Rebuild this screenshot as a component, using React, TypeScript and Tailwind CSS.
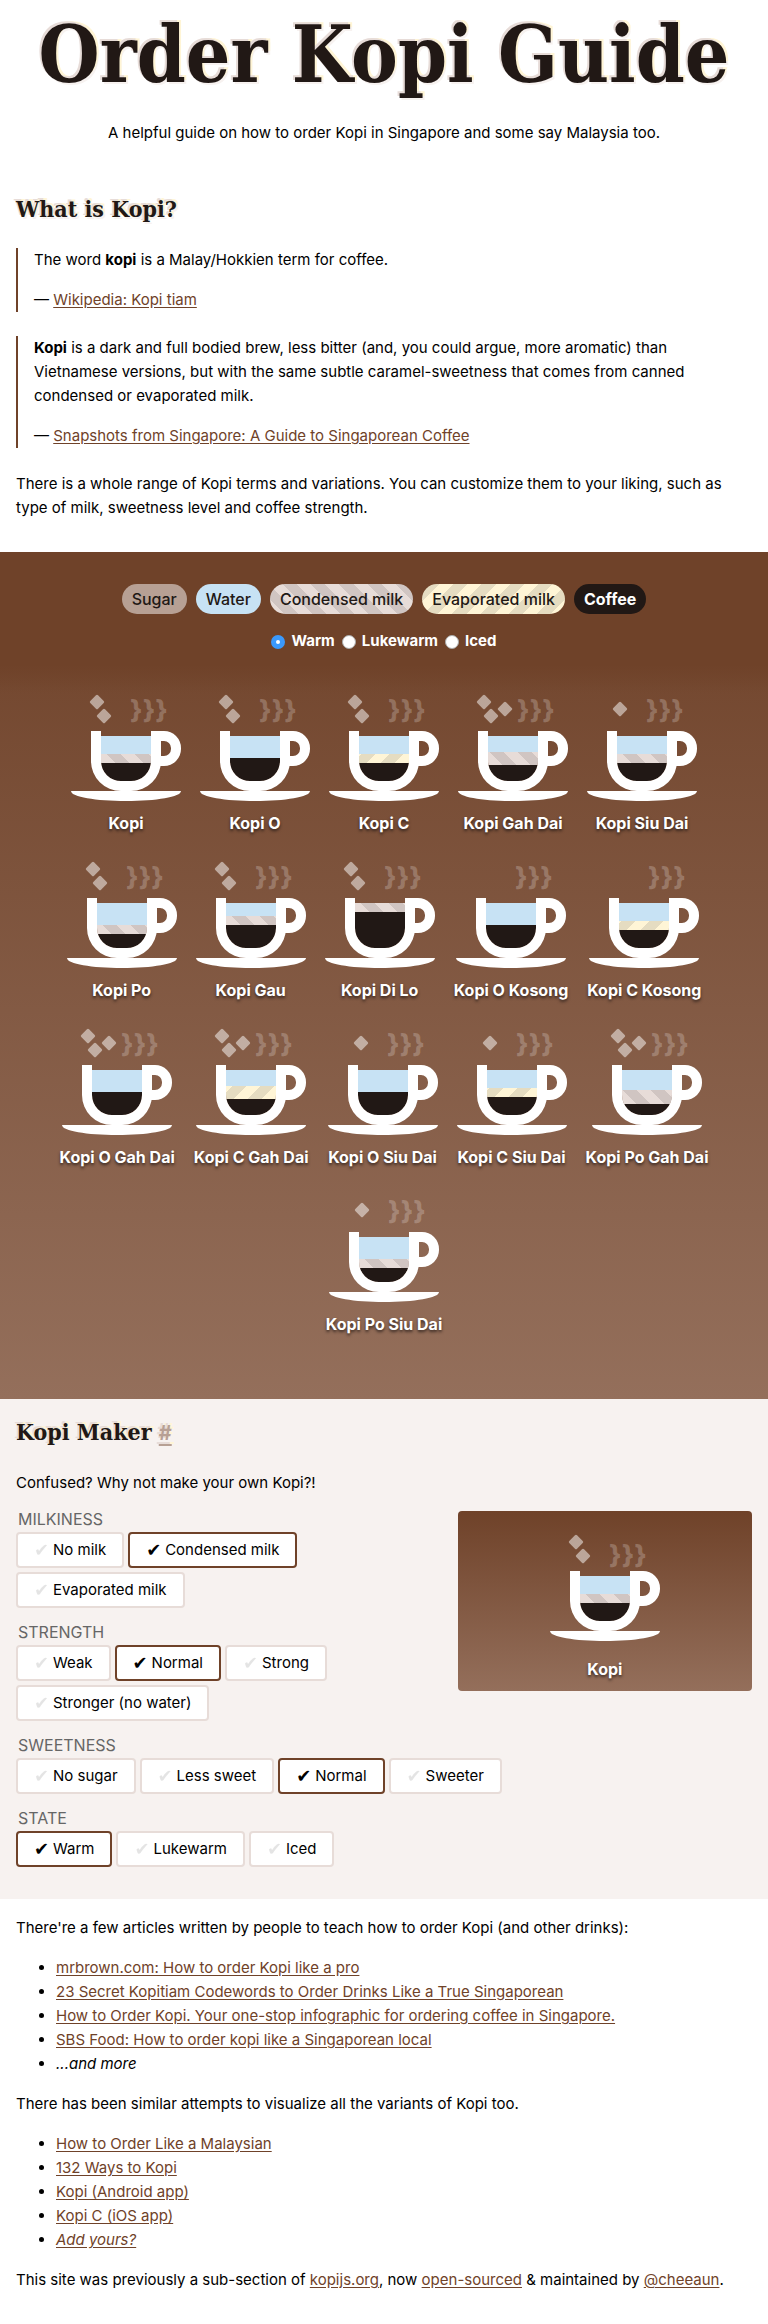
import { useId, useState } from "react";
import type { ReactNode } from "react";

type Milk = "condensed" | "evaporated";

interface Recipe {
  name: string;
  sugar: number;
  water: number;
  milk?: Milk;
  milkAmount?: number;
}

const CUP_DEPTH = 45;

// Amounts are pixel heights inside the cup; coffee fills whatever is left.
const RECIPES: Recipe[] = [
  { name: "Kopi", sugar: 2, water: 18, milk: "condensed", milkAmount: 9 },
  { name: "Kopi O", sugar: 2, water: 22 },
  { name: "Kopi C", sugar: 2, water: 18, milk: "evaporated", milkAmount: 9 },
  { name: "Kopi Gah Dai", sugar: 3, water: 16, milk: "condensed", milkAmount: 13 },
  { name: "Kopi Siu Dai", sugar: 1, water: 18, milk: "condensed", milkAmount: 9 },
  { name: "Kopi Po", sugar: 2, water: 22, milk: "condensed", milkAmount: 9 },
  { name: "Kopi Gau", sugar: 2, water: 13, milk: "condensed", milkAmount: 9 },
  { name: "Kopi Di Lo", sugar: 2, water: 0, milk: "condensed", milkAmount: 9 },
  { name: "Kopi O Kosong", sugar: 0, water: 22 },
  { name: "Kopi C Kosong", sugar: 0, water: 18, milk: "evaporated", milkAmount: 9 },
  { name: "Kopi O Gah Dai", sugar: 3, water: 22 },
  { name: "Kopi C Gah Dai", sugar: 3, water: 16, milk: "evaporated", milkAmount: 13 },
  { name: "Kopi O Siu Dai", sugar: 1, water: 22 },
  { name: "Kopi C Siu Dai", sugar: 1, water: 18, milk: "evaporated", milkAmount: 9 },
  { name: "Kopi Po Gah Dai", sugar: 3, water: 20, milk: "condensed", milkAmount: 14 },
  { name: "Kopi Po Siu Dai", sugar: 1, water: 22, milk: "condensed", milkAmount: 9 },
];

const SUGAR_SPOTS: Record<number, [number, number][]> = {
  0: [],
  1: [[33, 16]],
  2: [[26, 9], [33, 23]],
  3: [[26, 9], [33, 23], [47, 16]],
};

function Cup({ recipe, state, steamDrop = 0 }: { recipe: Recipe; state: string; steamDrop?: number }) {
  const id = useId();
  const { sugar, water, milk, milkAmount = 0 } = recipe;
  const top = 43;
  const milkTop = top + water;
  const milkBottom = milkTop + milkAmount;
  const bottom = top + CUP_DEPTH;
  const start = milk === "evaporated" ? 80 : 30;
  const end = milk === "evaporated" ? 80 - 14.142 : 30 + 14.142;
  const light = milk === "evaporated" ? "#fff5d6" : "#e7dcd8";
  const dark = milk === "evaporated" ? "#e5dcc1" : "#d0c5c2";
  return (
    <svg width="110" height="108" viewBox="0 0 110 108" className="block overflow-visible" aria-hidden="true">
      <defs>
        <clipPath id={id + "c"}>
          <path d="M30 38V68a20 20 0 0 0 20 20h10a20 20 0 0 0 20-20V38z" />
        </clipPath>
        <linearGradient id={id + "m"} gradientUnits="userSpaceOnUse" spreadMethod="repeat" x1={start} y1={milkBottom} x2={end} y2={milkBottom - 14.142}>
          <stop offset="0" stopColor={light} />
          <stop offset="0.5" stopColor={light} />
          <stop offset="0.5" stopColor={dark} />
          <stop offset="1" stopColor={dark} />
        </linearGradient>
      </defs>
      {SUGAR_SPOTS[sugar].map(([x, y]) => (
        <rect key={x} x={x - 5.5} y={y - 5.5} width="11" height="11" rx="1.5" fill="#fff" fillOpacity="0.5" transform={`rotate(45 ${x} ${y})`} />
      ))}
      {state === "Warm" && (
        <text x="59" y={26 + steamDrop} fontSize="26" className="font-['Inter'] font-extrabold" fill="#fff" fillOpacity="0.22">
          {"}}}"}
        </text>
      )}
      <g clipPath={`url(#${id}c)`}>
        <rect x="30" y={top} width="50" height={water} fill="#c7e2f4" />
        <rect x="30" y={milkTop} width="50" height={milkAmount} fill={`url(#${id}m)`} />
        <rect x="30" y={milkBottom} width="50" height={bottom - milkBottom} fill="#211815" />
      </g>
      <path fill="#fff" d="M20 38h10v30a20 20 0 0 0 20 20h10a20 20 0 0 0 20-20V38h10v30a30 30 0 0 1-30 30H50a30 30 0 0 1-30-30z" />
      <path fill="#fff" fillRule="evenodd" d="M80 38h13a17 17 0 0 1 17 17v1a17 17 0 0 1-17 17h-9zM90 48v15h3a7 7 0 0 0 7-7v-1a7 7 0 0 0-7-7z" />
      <path fill="#fff" d="M0 98h110c0 6-25 10-55 10S0 104 0 98z" />
    </svg>
  );
}

const DRINK_LABEL = "text-base leading-6 font-bold whitespace-nowrap text-white [text-shadow:0_2px_3px_rgba(33,24,21,0.8)]";
const HEADING_SHADOW = "[text-shadow:-2px_-2px_0_#e7dcd8,2px_-2px_0_#fff5d6,2px_2px_0_#f7f2f0]";
const HEADING = "font-['DejaVu_Serif_Condensed','DejaVu_Serif',serif] font-bold text-[#211815]";

function A({ children, href = "#" }: { children: ReactNode; href?: string }) {
  return (
    <a href={href} className="text-[#6f4229] underline underline-offset-2">
      {children}
    </a>
  );
}

const PILLS = [
  { name: "Sugar", look: "bg-[#b7a094]" },
  { name: "Water", look: "bg-[#c7e2f4]" },
  { name: "Condensed milk", look: "bg-[repeating-linear-gradient(45deg,#e7dcd8_0_10px,#d0c5c2_10px_20px)]" },
  { name: "Evaporated milk", look: "bg-[repeating-linear-gradient(-45deg,#fff5d6_0_10px,#e5dcc1_10px_20px)]" },
];

function Choices({ title, options, value, onChange }: { title: string; options: string[]; value: string; onChange: (v: string) => void }) {
  return (
    <div role="radiogroup" aria-label={title} className="mb-3 flex flex-col">
      <div className="pl-[2px] text-base leading-[25px] text-[#666] uppercase">{title}</div>
      <div className="flex flex-wrap gap-1">
        {options.map((option) => {
          const on = option === value;
          return (
            <label
              key={option}
              className={
                "relative flex h-9 cursor-pointer items-center gap-[5px] rounded border-2 bg-white px-4 whitespace-nowrap " +
                (on ? "border-[#6f4229]" : "border-[#e7dcd8]")
              }
            >
              <input type="radio" name={title} checked={on} onChange={() => onChange(option)} className="sr-only" />
              <span aria-hidden="true" className={"w-[14px] font-['DejaVu_Sans'] text-lg leading-6 " + (on ? "" : "opacity-10")}>
                ✔
              </span>
              {option}
            </label>
          );
        })}
      </div>
    </div>
  );
}

const WATER: Record<string, number> = { Weak: 22, Normal: 18, Strong: 13, "Stronger (no water)": 0 };
const SUGAR: Record<string, number> = { "No sugar": 0, "Less sweet": 1, Normal: 2, Sweeter: 3 };
const STATES = ["Warm", "Lukewarm", "Iced"];

function mix(milkiness: string, strength: string, sweetness: string, state: string): Recipe {
  const milk: Milk | undefined = milkiness === "Condensed milk" ? "condensed" : milkiness === "Evaporated milk" ? "evaporated" : undefined;
  const words = [
    "Kopi",
    milkiness === "No milk" ? "O" : milk === "evaporated" ? "C" : "",
    strength === "Weak" ? "Po" : strength === "Strong" ? "Gau" : strength === "Normal" ? "" : "Di Lo",
    ["Kosong", "Siu Dai", "", "Gah Dai"][SUGAR[sweetness]],
    state === "Iced" ? "Peng" : state === "Lukewarm" ? "Pua Sio" : "",
  ];
  return { name: words.filter(Boolean).join(" "), sugar: SUGAR[sweetness], water: WATER[strength], milk, milkAmount: milk ? 9 : 0 };
}

export default function App() {
  const [temp, setTemp] = useState("Warm");
  const [milkiness, setMilkiness] = useState("Condensed milk");
  const [strength, setStrength] = useState("Normal");
  const [sweetness, setSweetness] = useState("Normal");
  const [state, setState] = useState("Warm");
  const own = mix(milkiness, strength, sweetness, state);

  return (
    <div className="bg-white font-['Inter',sans-serif] text-[15px] leading-6 text-black">
      <header className="px-4 text-center">
        <h1 className={`pt-[5px] text-[78px] leading-[100px] ${HEADING} ${HEADING_SHADOW}`}>Order Kopi Guide</h1>
        <p className="mt-4">A helpful guide on how to order Kopi in Singapore and some say Malaysia too.</p>
      </header>

      <section className="px-4 pt-12 pb-8">
        <h2 className={`text-[23px] leading-8 ${HEADING} ${HEADING_SHADOW}`}>What is Kopi?</h2>
        <blockquote className="mt-[23px] border-l-2 border-[#6f4229] pl-4">
          <p>
            The word <b>kopi</b> is a Malay/Hokkien term for coffee.
          </p>
          <p className="mt-4">
            — <A>Wikipedia: Kopi tiam</A>
          </p>
        </blockquote>
        <blockquote className="mt-6 mr-4 border-l-2 border-[#6f4229] pl-4">
          <p>
            <b>Kopi</b> is a dark and full bodied brew, less bitter (and, you could argue, more aromatic) than Vietnamese versions, but with
            the same subtle caramel-sweetness that comes from canned condensed or evaporated milk.
          </p>
          <p className="mt-4">
            — <A>Snapshots from Singapore: A Guide to Singaporean Coffee</A>
          </p>
        </blockquote>
        <p className="mt-6">
          There is a whole range of Kopi terms and variations. You can customize them to your liking, such as type of milk, sweetness level
          and coffee strength.
        </p>
      </section>

      <section className="bg-linear-to-b from-[#6f4229] to-[#946f5b] pb-[63px]">
        <div className="bg-linear-to-b from-[#6f4229] from-80% to-transparent pt-8 pb-10 text-base">
          <ul className="flex flex-wrap justify-center gap-[9px] px-4 font-medium text-[#211815]">
            {PILLS.map((pill) => (
              <li key={pill.name} className={"rounded-full px-[10px] py-[3px] " + pill.look}>
                {pill.name}
              </li>
            ))}
            <li className="rounded-full bg-[#211815] px-[10px] py-[3px] font-bold text-white">Coffee</li>
          </ul>
          <div className="mt-[15px] flex justify-center gap-[7px] text-[15px] leading-6 font-bold text-white">
            {STATES.map((s) => (
              <label key={s} className="flex items-center gap-[6px]">
                <input
                  type="radio"
                  name="temperature"
                  checked={temp === s}
                  onChange={() => setTemp(s)}
                  className="mt-[2px] size-[14px] appearance-none rounded-full border border-[#aaa] bg-white checked:border-[5px] checked:border-[#3b99fc]"
                />
                {s}
              </label>
            ))}
          </div>
        </div>
        <ul className="flex flex-wrap justify-center gap-x-[19px] gap-y-[25px] px-4">
          {RECIPES.map((recipe) => (
            <li key={recipe.name} className="flex min-w-[110px] flex-col items-center gap-[10px]">
              <Cup recipe={recipe} state={temp} />
              <span className={DRINK_LABEL}>{recipe.name}</span>
            </li>
          ))}
        </ul>
      </section>

      <section className="flow-root bg-[#f7f2f0] px-4 pt-[17px] pb-5">
        <h2 className={`text-[23px] leading-8 ${HEADING} ${HEADING_SHADOW}`}>
          Kopi Maker{" "}
          <a href="#maker" className="font-['Inter'] text-xl text-[#b7a094] underline underline-offset-4">
            #
          </a>
        </h2>
        <p className="mt-[23px] mb-3">Confused? Why not make your own Kopi?!</p>
        <div className="float-right mt-1 ml-2 flex w-2/5 flex-col items-center gap-4 rounded bg-linear-to-b from-[#6f4229] to-[#946f5b] pt-[22px] pb-[10px]">
          <Cup recipe={own} state={state} steamDrop={5} />
          <span className={DRINK_LABEL}>{own.name}</span>
        </div>
        <Choices title="Milkiness" options={["No milk", "Condensed milk", "Evaporated milk"]} value={milkiness} onChange={setMilkiness} />
        <Choices title="Strength" options={["Weak", "Normal", "Strong", "Stronger (no water)"]} value={strength} onChange={setStrength} />
        <Choices title="Sweetness" options={["No sugar", "Less sweet", "Normal", "Sweeter"]} value={sweetness} onChange={setSweetness} />
        <Choices title="State" options={STATES} value={state} onChange={setState} />
      </section>

      <footer className="flex flex-col gap-4 px-4 pt-[17px] pb-8">
        <p>There're a few articles written by people to teach how to order Kopi (and other drinks):</p>
        <ul className="list-disc pl-10">
          <li><A>mrbrown.com: How to order Kopi like a pro</A></li>
          <li><A>23 Secret Kopitiam Codewords to Order Drinks Like a True Singaporean</A></li>
          <li><A>How to Order Kopi. Your one-stop infographic for ordering coffee in Singapore.</A></li>
          <li><A>SBS Food: How to order kopi like a Singaporean local</A></li>
          <li><em>...and more</em></li>
        </ul>
        <p>There has been similar attempts to visualize all the variants of Kopi too.</p>
        <ul className="list-disc pl-10">
          <li><A>How to Order Like a Malaysian</A></li>
          <li><A>132 Ways to Kopi</A></li>
          <li><A>Kopi (Android app)</A></li>
          <li><A>Kopi C (iOS app)</A></li>
          <li><em><A>Add yours?</A></em></li>
        </ul>
        <p>
          This site was previously a sub-section of <A>kopijs.org</A>, now <A>open-sourced</A> &amp; maintained by <A>@cheeaun</A>.
        </p>
      </footer>
    </div>
  );
}
